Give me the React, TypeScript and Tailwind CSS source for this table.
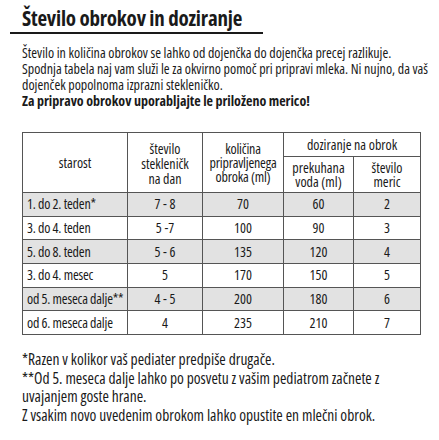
import React from "react";

const rows = [
  ["1. do 2. teden*", "7 - 8", "70", "60", "2"],
  ["3. do 4. teden", "5 -7", "100", "90", "3"],
  ["5. do 8. teden", "5 - 6", "135", "120", "4"],
  ["3. do 4. mesec", "5", "170", "150", "5"],
  ["od 5. meseca dalje**", "4 - 5", "200", "180", "6"],
  ["od 6. meseca dalje", "4", "235", "210", "7"],
];

export default function App() {
  return (
    <div className="w-[439px] h-[440px] overflow-hidden bg-white text-[#1a1a1a] font-['Open_Sans',sans-serif] [font-stretch:75%]">
      {/* naslov */}
      <div className="pt-[5px] pl-[10px]">
        <h1 className="w-[253px] pl-[12px] border-b-2 border-[#1a1a1a] text-[21px] leading-[27px] font-bold tracking-[-0.2px]">
          Število obrokov in doziranje
        </h1>
      </div>

      {/* uvod */}
      <div className="px-[22px] pt-[11px] text-[14px] leading-[16px] whitespace-nowrap">
        <p>Število in količina obrokov se lahko od dojenčka do dojenčka precej razlikuje.</p>
        <p>Spodnja tabela naj vam služi le za okvirno pomoč pri pripravi mleka. Ni nujno, da vaš</p>
        <p>dojenček popolnoma izprazni stekleničko.</p>
        <p className="font-bold">Za pripravo obrokov uporabljajte le priloženo merico!</p>
      </div>

      {/* tabela */}
      <div className="pl-[22px] pt-[23px]">
        <table className="w-[398px] table-fixed border-collapse border-[1.5px] border-[#444] text-[14px]">
          <colgroup>
            <col className="w-[105px]" />
            <col className="w-[75px]" />
            <col className="w-[81px]" />
            <col className="w-[70px]" />
            <col className="w-[67px]" />
          </colgroup>
          <thead>
            <tr className="h-[24px]">
              <th rowSpan={2} className="border border-[#555] font-normal">starost</th>
              <th rowSpan={2} className="border border-[#555] font-normal leading-[15px] pt-[1px]">
                število<br />stekleničk<br />na dan
              </th>
              <th rowSpan={2} className="border border-[#555] font-normal leading-[14px] tracking-[-0.2px]">
                količina<br />pripravljenega<br />obroka (ml)
              </th>
              <th colSpan={2} className="border border-[#555] font-normal leading-[16px]">doziranje na obrok</th>
            </tr>
            <tr className="h-[36px]">
              <th className="border border-[#555] font-normal leading-[14px]">prekuhana<br />voda (ml)</th>
              <th className="border border-[#555] font-normal leading-[14px]">število<br />meric</th>
            </tr>
          </thead>
          <tbody>
            {rows.map((r, i) => (
              <tr key={i} className={`h-[23.7px] ${i % 2 === 0 ? "bg-[#e2e2e2]" : "bg-white"}`}>
                <td className="border border-[#555] pl-[4px] leading-[16px] whitespace-nowrap tracking-[-0.2px]">{r[0]}</td>
                {r.slice(1).map((c, j) => (
                  <td key={j} className="border border-[#555] text-center leading-[16px]">{c}</td>
                ))}
              </tr>
            ))}
          </tbody>
        </table>
      </div>

      {/* opombe */}
      <div className="px-[22px] pt-[15px] text-[15.5px] leading-[18.5px]">
        <p>*Razen v kolikor vaš pediater predpiše drugače.</p>
        <p>**Od 5. meseca dalje lahko po posvetu z vašim pediatrom začnete z</p>
        <p>uvajanjem goste hrane.</p>
        <p>Z vsakim novo uvedenim obrokom lahko opustite en mlečni obrok.</p>
      </div>
    </div>
  );
}
